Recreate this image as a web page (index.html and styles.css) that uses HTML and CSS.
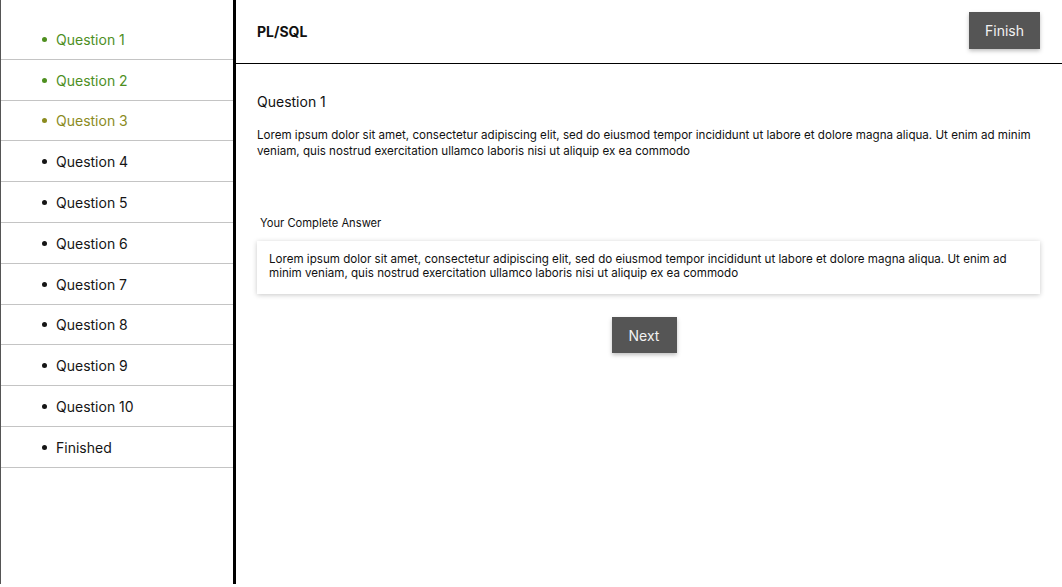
FILE: index.html
```html
<!DOCTYPE html>
<html>
<head>
<meta charset="utf-8">
<link rel="stylesheet" href="styles.css">
</head>
<body>
<div class="app">
  <aside class="sidebar">
    <ul class="qlist">
      <li class="item done">Question 1</li>
      <li class="item done">Question 2</li>
      <li class="item partial">Question 3</li>
      <li class="item">Question 4</li>
      <li class="item">Question 5</li>
      <li class="item">Question 6</li>
      <li class="item">Question 7</li>
      <li class="item">Question 8</li>
      <li class="item">Question 9</li>
      <li class="item">Question 10</li>
      <li class="item">Finished</li>
    </ul>
  </aside>
  <main class="main">
    <header class="topbar">
      <div class="title">PL/SQL</div>
      <button class="btn">Finish</button>
    </header>
    <section class="content">
      <h2 class="qtitle">Question 1</h2>
      <p class="qtext">Lorem ipsum dolor sit amet, consectetur adipiscing elit, sed do eiusmod tempor incididunt ut labore et dolore magna aliqua. Ut enim ad minim veniam, quis nostrud exercitation ullamco laboris nisi ut aliquip ex ea commodo</p>
      <div class="alabel">Your Complete Answer</div>
      <div class="answer">Lorem ipsum dolor sit amet, consectetur adipiscing elit, sed do eiusmod tempor incididunt ut labore et dolore magna aliqua. Ut enim ad minim veniam, quis nostrud exercitation ullamco laboris nisi ut aliquip ex ea commodo</div>
      <div class="actions"><button class="btn next">Next</button></div>
    </section>
  </main>
</div>
</body>
</html>
```
FILE: styles.css
```css
* { box-sizing: border-box; }
html, body { margin: 0; padding: 0; background: #fff; }
body { font-family: Inter, "Noto Sans", sans-serif; color: #111; }
.app { display: flex; width: 1062px; height: 587px; }
.sidebar {
  width: 236px;
  height: 584px;
  border-left: 1px solid #555;
  border-right: 3px solid #000;
  padding-top: 19px;
  flex-shrink: 0;
}
.qlist { list-style: none; margin: 0; padding: 0; }
.item {
  height: 40.8px;
  border-bottom: 1.5px solid #c4c4c4;
  display: flex;
  align-items: center;
  padding: 1px 0 0 55px;
  font-size: 14px;
  position: relative;
  color: #151515;
}
.item::before {
  content: "";
  position: absolute;
  left: 41px;
  top: 50%;
  width: 5px;
  height: 5px;
  margin-top: -2px;
  border-radius: 50%;
  background: currentColor;
}
.item.done { color: #4e8f1f; }
.item.partial { color: #8b8b1e; }
.main { flex: 1; display: flex; flex-direction: column; }
.topbar {
  height: 64px;
  border-bottom: 1px solid #000;
  display: flex;
  align-items: center;
  justify-content: space-between;
  padding: 0 22px 0 21px;
}
.title { font-weight: 700; font-size: 14px; }
.btn {
  font-family: Inter, "Noto Sans", sans-serif;
  background: #555;
  color: #f2f2f2;
  border: none;
  font-size: 14px;
  width: 71px;
  height: 37px;
  box-shadow: 0 2px 4px rgba(0,0,0,0.25);
  padding: 0;
  margin-top: -2px;
}
.content { padding: 0 22px 0 21px; }
.qtitle { font-size: 14px; font-weight: 400; margin: 29px 0 0; line-height: 18px; }
.qtext { font-size: 11.6px; line-height: 16px; margin: 16px 0 0; }
.alabel { font-size: 11.2px; line-height: 14px; margin: 57px 0 0 3px; }
.answer {
  margin-top: 11px;
  font-size: 11.6px;
  line-height: 14px;
  padding: 11px 12px 14px;
  background: #fff;
  box-shadow: 0 1px 5px rgba(0,0,0,0.22);
}
.actions { display: flex; justify-content: center; margin-top: 23px; padding-right: 9px; }
.btn.next { width: 65px; height: 36px; margin: 0; }
```
